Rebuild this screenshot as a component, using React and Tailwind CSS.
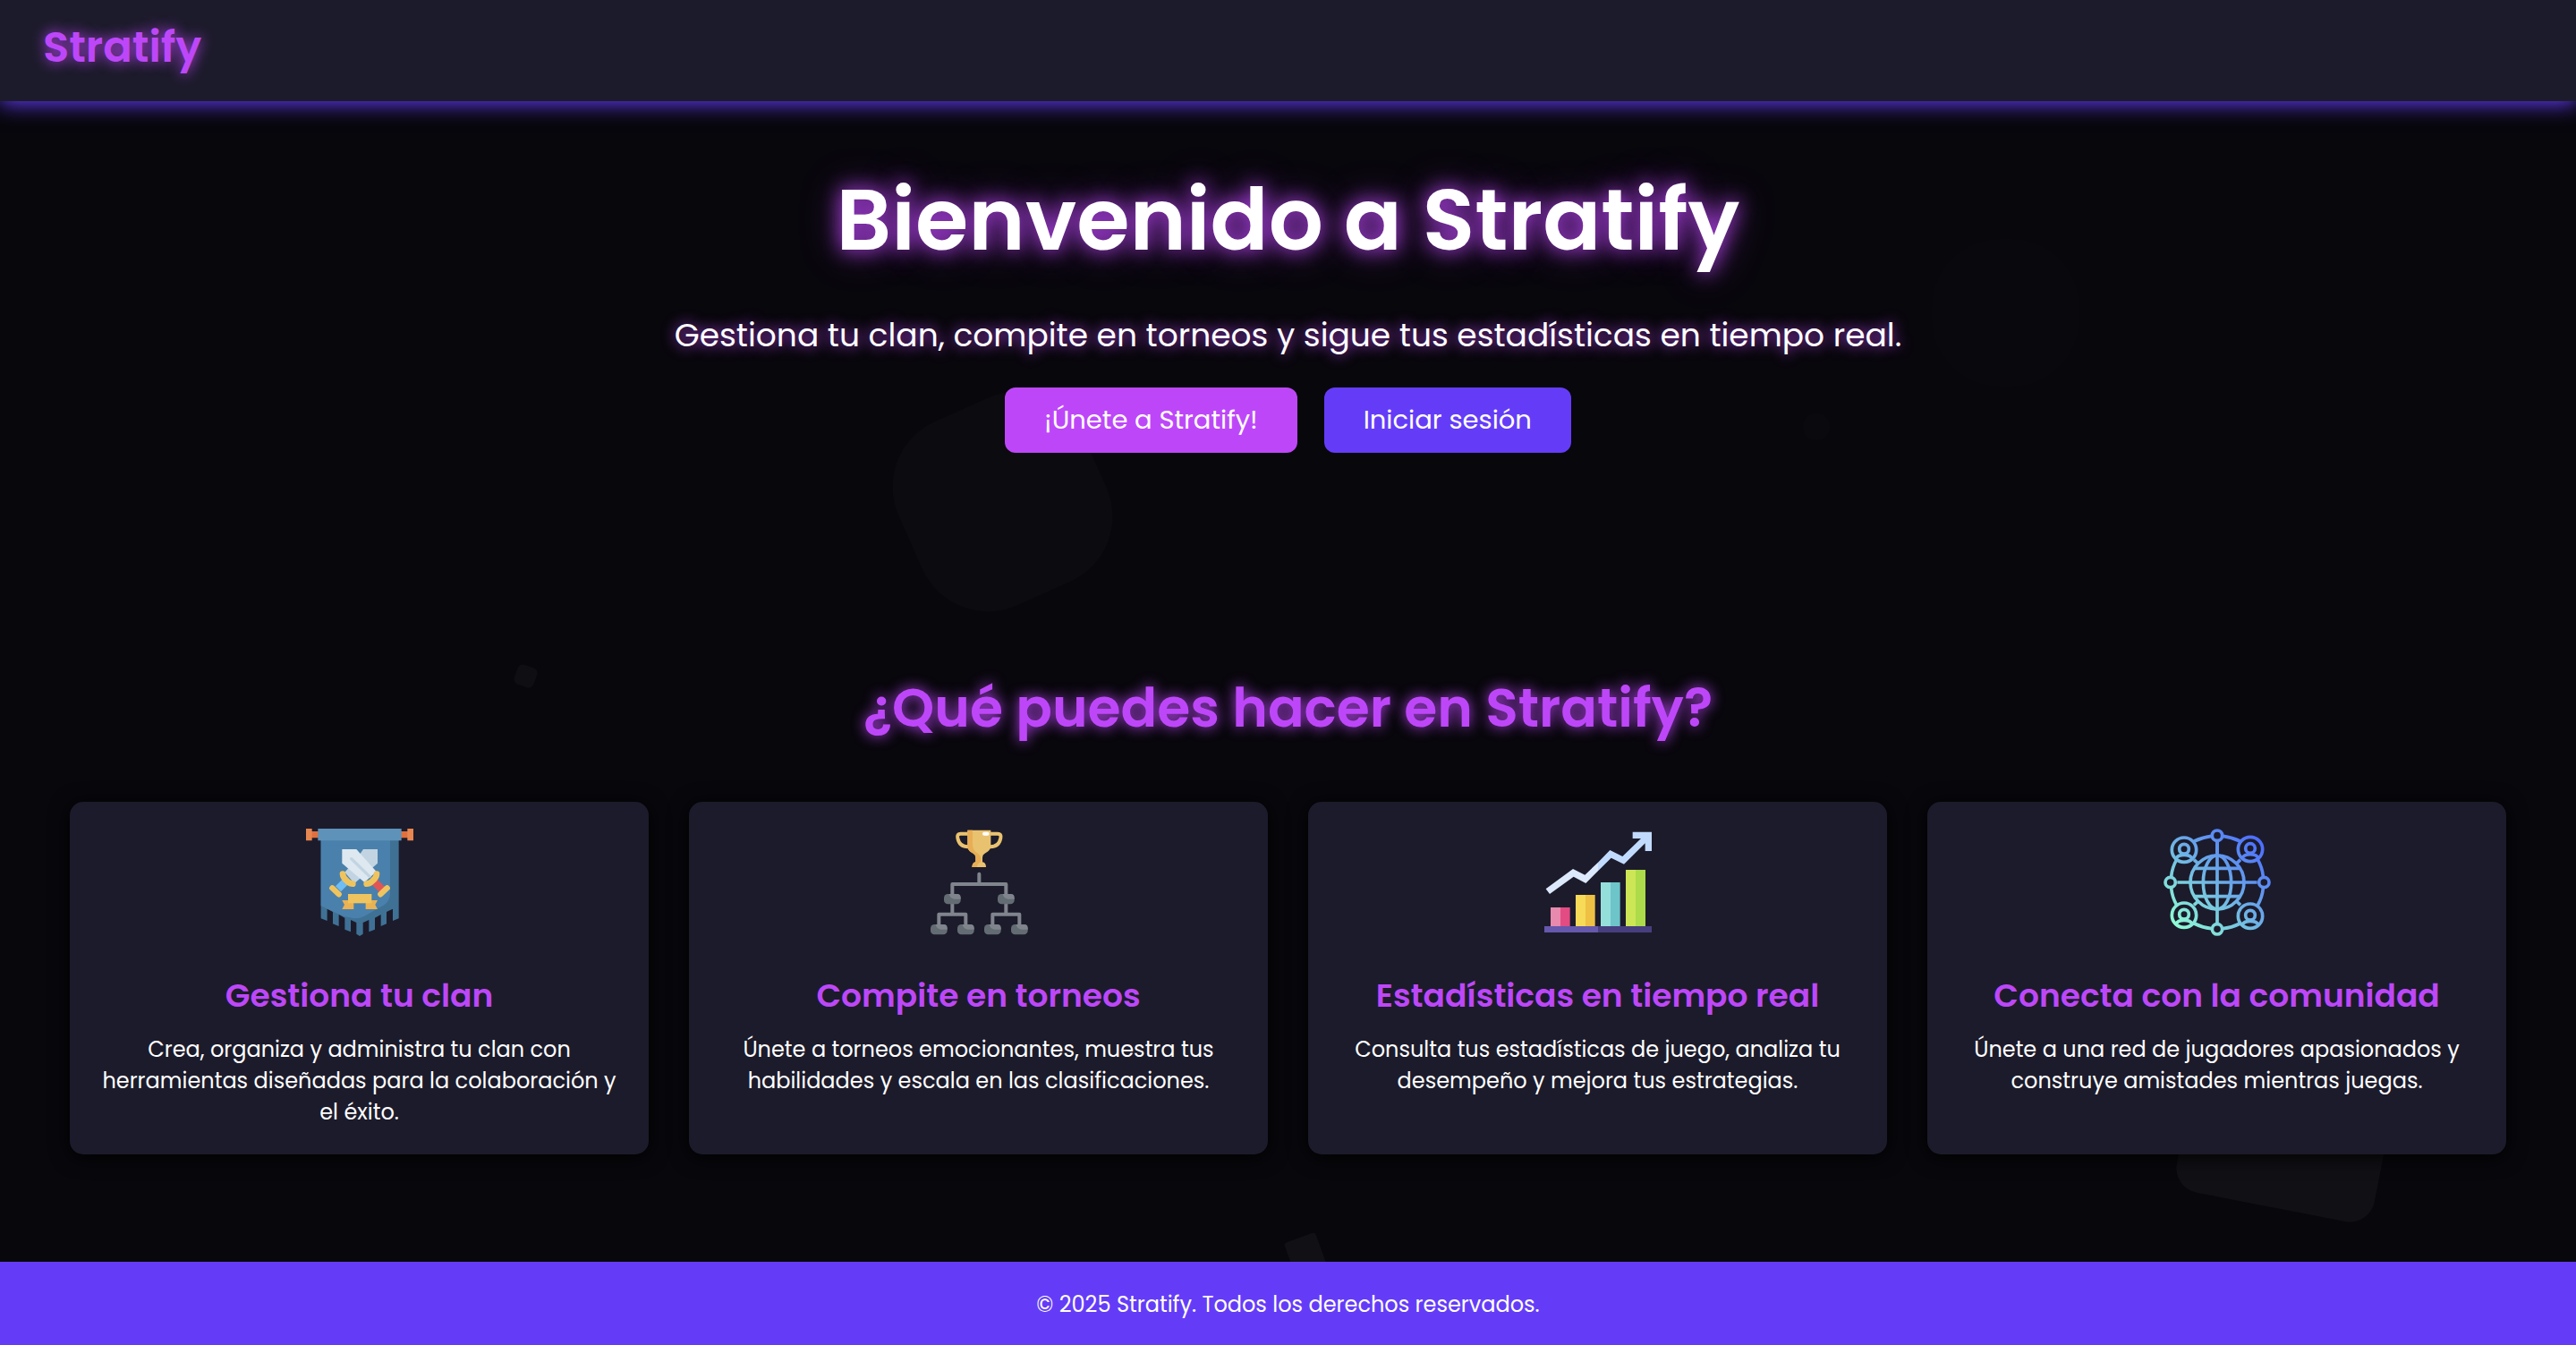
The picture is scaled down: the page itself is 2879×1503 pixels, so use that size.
const SHAPES = [
  "left-[35%] top-[448px] size-[225px] -rotate-24 rounded-[80px] bg-white/2",
  "left-[85%] top-[1126px] size-[225px] rotate-11 rounded-[28px] bg-white/4",
  "left-[75%] top-[267px] size-[165px] rounded-[76px] bg-white/[0.006]",
  "left-[70%] top-[462px] size-[30px] rounded-[14px] bg-white/[0.012]",
  "left-[50%] top-[1382px] size-[37px] -rotate-20 rounded-[3px] bg-white/4",
  "left-[20%] top-[744px] size-[23px] rotate-20 rounded-[6px] bg-white/3",
  "left-[10%] top-[354px] size-[30px] rounded-[14px] bg-white/[0.005]",
];

function BannerIcon() {
  return (
    <svg viewBox="66 78 360 360" className="size-[120px]" aria-hidden="true">
      <path fill="#3f7195" d="M116 112H377V379L357 387V347L336 357V397L317 405V366L297 377V416L277 424V384L257 393V431L246 438L235 431V393L216 384V424L196 416V377L176 366V405L156 397V357L137 347V387L116 379Z" />
      <path fill="#4a80ac" d="M116 112H348V295Q348 320 328 334L262 371Q240 383 213 376Q190 372 170 362L116 337Z" />
      <path fill="#e0703f" d="M80 87H412V109H80Z" />
      <path fill="#e78650" d="M66 78H86V118H66ZM406 78H426V118H406Z" />
      <path fill="#5e92b8" d="M106 78H386V118H106Z" />
      <path fill="#c2d4e1" d="M258 147H306V194L228 262L196 224L238 176Z" />
      <path fill="#6fbdf3" d="M189 247L207 265L183 289L165 271Z" />
      <path fill="#dde8f0" d="M187 147H235L302 222L262 258L187 194Z" />
      <path d="M218 179L279 238" stroke="#c2d4e1" strokeWidth="10" strokeLinecap="round" />
      <path fill="#e05656" d="M304 247L286 265L312 291L330 273Z" />
      <path d="M189 230Q190 243 204 254Q214 263 223 263M303 230Q302 243 288 254Q278 263 269 263" stroke="#efc45e" strokeWidth="20" strokeLinecap="round" fill="none" />
      <path d="M154 277L176 298M338 277L316 298" stroke="#efc45e" strokeWidth="19" strokeLinecap="round" />
      <path fill="#eab252" d="M187 318H226V348H187L195 333ZM306 318H266V348H306L298 333Z" />
      <path fill="#efc45e" d="M207 297H286V328H207Z" />
    </svg>
  );
}

function TournamentIcon() {
  const boxes = [
    [104, 267],
    [284, 267],
    [59, 369],
    [149, 369],
    [239, 369],
    [329, 369],
  ];
  return (
    <svg viewBox="41 48 360 360" className="size-[120px]" aria-hidden="true">
      <path fill="none" stroke="#e9c270" strokeWidth="12" d="M186 65H160Q147 65 150 80C154 100 168 110 188 109M258 65H284Q297 65 294 80C290 100 276 110 256 109" />
      <path fill="#e9c270" d="M183 53H261V105C261 120 250 126 241 131Q233 135 233 145V160Q245 162 245 177H198Q199 162 210 160V145Q210 135 202 131C192 126 183 120 183 105Z" />
      <path fill="#e8ae55" d="M183 53H200V98C200 116 207 124 216 130Q228 138 228 150V160Q216 163 215 177H198Q199 162 210 160V145Q210 135 202 131C192 126 183 120 183 105Z" />
      <rect x="233" y="59" width="23" height="12" rx="6" fill="#fff" />
      <path fill="none" stroke="#80858d" strokeWidth="12" strokeLinecap="round" strokeLinejoin="round" d="M222 200V234M132 272V234H312V272M132 300V335M312 300V335M87 375V335H177V375M267 375V335H357V375" />
      {boxes.map(([x, y]) => (
        <g key={`${x}-${y}`}>
          <rect x={x} y={y} width="56" height="34" rx="13" fill="#646c73" />
          <path transform={`translate(${x} ${y})`} fill="#80858d" d="M17 0H44Q56 0 56 13V17H35Q20 15 17 0Z" />
        </g>
      ))}
    </svg>
  );
}

function ChartIcon() {
  return (
    <svg viewBox="48 48 360 360" className="size-[120px]" aria-hidden="true">
      <path fill="#6558ad" d="M48 375H228V396H48Z" />
      <path fill="#473e7f" d="M228 375H408V396H228Z" />
      <path fill="#e889ae" d="M69 312H102V375H69Z" />
      <path fill="#e34c82" d="M102 312H134V375H102Z" />
      <path fill="#f6da58" d="M153 270H186V375H153Z" />
      <path fill="#eec044" d="M186 270H218V375H186Z" />
      <path fill="#95dfdb" d="M237 228H270V375H237Z" />
      <path fill="#6dc5c9" d="M270 228H302V375H270Z" />
      <path fill="#cce655" d="M321 186H354V375H321Z" />
      <path fill="#addb49" d="M354 186H387V375H354Z" />
      <path fill="#dce9fd" d="M53 250L144 183L184 203L228 161V190L187 231L146 209L66 267Z" />
      <path fill="#c1dbfe" d="M228 161L268 120L310 141L372 81H344V59H408V123H386V97L315 167L272 146L228 190Z" />
    </svg>
  );
}

function CommunityIcon() {
  const members = [
    [123, 119],
    [345, 117],
    [123, 338],
    [345, 341],
  ];
  return (
    <svg viewBox="54 48 360 360" className="size-[120px]" aria-hidden="true">
      <defs>
        <linearGradient id="community-stroke" gradientUnits="userSpaceOnUse" x1="95" y1="375" x2="375" y2="85">
          <stop offset="0" stopColor="#8ffcd4" />
          <stop offset="0.5" stopColor="#6db0e6" />
          <stop offset="1" stopColor="#4c6dfd" />
        </linearGradient>
      </defs>
      <g fill="none" stroke="url(#community-stroke)" strokeWidth="11">
        <circle cx="234" cy="228" r="90" />
        <ellipse cx="234" cy="228" rx="47" ry="90" />
        <path d="M234 93V363M100 228H368M158 181H310M158 275H310" />
        <circle cx="234" cy="71" r="17" />
        <circle cx="234" cy="385" r="17" />
        <circle cx="77" cy="228" r="17" />
        <circle cx="391" cy="228" r="17" />
        <path d="M157 90Q183 77 214 73M254 73Q285 77 311 90M157 366Q183 379 214 383M254 383Q285 379 311 366M80 208Q83 178 98 152M80 248Q83 278 98 304M388 208Q385 178 370 152M388 248Q385 278 370 304M156 152L172 167M312 152L297 167M156 304L172 290M312 304L297 290" />
        {members.map(([x, y]) => (
          <g key={`${x}-${y}`}>
            <circle cx={x} cy={y} r="41" />
            <circle cx={x} cy={y - 3} r="16" />
            <path d={`M${x - 27} ${y + 30}C${x - 20} ${y + 13} ${x + 20} ${y + 13} ${x + 27} ${y + 30}`} />
          </g>
        ))}
        <path d="M234 93V130" />
      </g>
    </svg>
  );
}

const FEATURES = [
  {
    Icon: BannerIcon,
    title: "Gestiona tu clan",
    text: "Crea, organiza y administra tu clan con herramientas diseñadas para la colaboración y el éxito.",
  },
  {
    Icon: TournamentIcon,
    title: "Compite en torneos",
    text: "Únete a torneos emocionantes, muestra tus habilidades y escala en las clasificaciones.",
  },
  {
    Icon: ChartIcon,
    title: "Estadísticas en tiempo real",
    text: "Consulta tus estadísticas de juego, analiza tu desempeño y mejora tus estrategias.",
  },
  {
    Icon: CommunityIcon,
    title: "Conecta con la comunidad",
    text: "Únete a una red de jugadores apasionados y construye amistades mientras juegas.",
  },
];

export default function App() {
  return (
    <div className="relative flex min-h-screen flex-col overflow-hidden bg-[#08070c] font-['Poppins','Inter',sans-serif] text-white">
      <ul className="absolute inset-0" aria-hidden="true">
        {SHAPES.map((shape) => (
          <li key={shape} className={`absolute block ${shape}`} />
        ))}
      </ul>

      <header className="relative bg-[#1c1b2b] px-12 pt-[17px] pb-6 shadow-[0_3px_22px_#643cf8]">
        <a href="#" className="inline-block align-top text-[48px] leading-[72px] font-semibold text-[#bd47f8] [text-shadow:0_0_15px_#bd47f8]">
          Stratify
        </a>
      </header>

      <main className="relative flex grow flex-col">
        <section className="flex flex-col items-center pt-[61px] text-center">
          <h1 className="text-[96px] leading-[144px] font-semibold [text-shadow:0_0_22px_#bd47f8,0_0_45px_#bd47f866]">
            Bienvenido a Stratify
          </h1>
          <p className="mt-[30px] text-[36px] leading-[54px] [text-shadow:0_0_15px_#bd47f8]">
            Gestiona tu clan, compite en torneos y sigue tus estadísticas en tiempo real.
          </p>
          <div className="mt-[31px] flex gap-[30px]">
            <a href="#" className="rounded-xl bg-[#bd47f8] px-[44px] py-[15px] text-[29px] leading-[43px]">
              ¡Únete a Stratify!
            </a>
            <a href="#" className="rounded-xl bg-[#643cf8] px-[44px] py-[15px] text-[29px] leading-[43px]">
              Iniciar sesión
            </a>
          </div>
        </section>

        <section className="mt-auto px-[78px] pb-[120px] text-center">
          <h2 className="text-[60px] leading-[90px] font-semibold text-[#bd47f8] [text-shadow:0_0_15px_#bd47f8]">
            ¿Qué puedes hacer en Stratify?
          </h2>
          <div className="mt-[60px] grid grid-cols-4 gap-[45px]">
            {FEATURES.map(({ Icon, title, text }) => (
              <article key={title} className="flex flex-col items-center rounded-[15px] bg-[#1c1b2b] p-[30px] shadow-[0_3px_22px_#000000]">
                <Icon />
                <h3 className="mt-10 text-[36px] leading-[54px] font-semibold text-[#bd47f8]">{title}</h3>
                <p className="mt-[15px] text-[24px] leading-[35px]">{text}</p>
              </article>
            ))}
          </div>
        </section>
      </main>

      <footer className="relative bg-[#643cf8] pt-[30px] pb-7 text-center text-[24px] leading-[35px]">
        © 2025 Stratify. Todos los derechos reservados.
      </footer>
    </div>
  );
}
